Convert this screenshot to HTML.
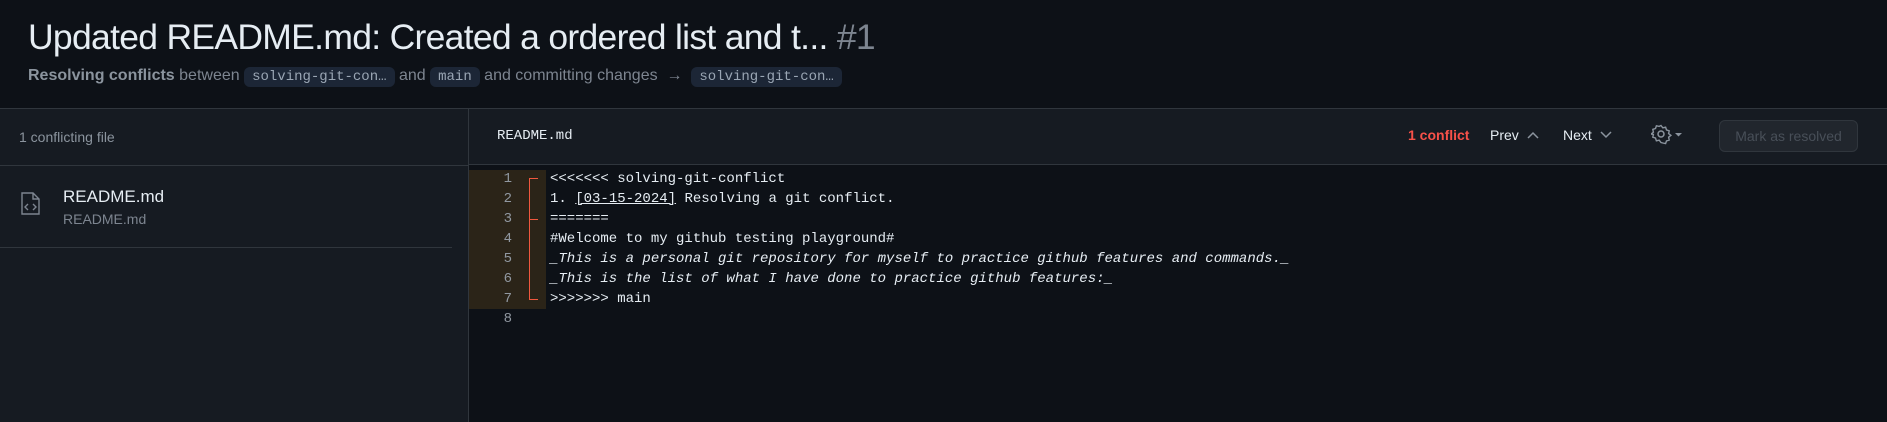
<!DOCTYPE html>
<html><head><style>
*{margin:0;padding:0;box-sizing:border-box}
body{width:1887px;height:422px;background:#0d1117;font-family:"Liberation Sans",sans-serif;color:#e6edf3;position:relative;overflow:hidden}
.a{position:absolute;white-space:nowrap}
.mono{font-family:"Liberation Mono",monospace}
.pill{background:#1c2636;border-radius:6px;padding:2px 8px;font-family:"Liberation Mono",monospace;font-size:14px;color:#9aa6b4}
.code{position:absolute;left:550px;font-family:"Liberation Mono",monospace;font-size:14px;color:#e6edf3}
.ln{position:absolute;left:480px;width:32px;text-align:right;font-family:"Liberation Mono",monospace;font-size:14px;color:#9198a1}
</style></head><body>
<div class="a" style="left:28px;top:17px;font-size:35.5px;letter-spacing:-0.7px">Updated README.md: Created a ordered list and t... <span style="color:#7d8590">#1</span></div>
<div class="a" style="left:28px;top:67px;font-size:16px;color:#7d8590"><b style="color:#8b949e">Resolving conflicts</b> between <span class="pill">solving-git-con…</span> and <span class="pill">main</span> and committing changes &nbsp;→&nbsp; <span class="pill">solving-git-con…</span></div>
<div class="a" style="left:0;top:108px;width:1887px;height:1px;background:#30363d"></div>
<div class="a" style="left:0;top:109px;width:468px;height:313px;background:#161b22"></div>
<div class="a" style="left:468px;top:109px;width:1px;height:313px;background:#30363d"></div>
<div class="a" style="left:19px;top:129px;font-size:14px;color:#8b949e">1 conflicting file</div>
<div class="a" style="left:0;top:165px;width:468px;height:1px;background:#30363d"></div>
<svg class="a" style="left:20px;top:191px" width="22" height="26" viewBox="0 0 22 26" fill="none" stroke="#7d8590" stroke-width="1.4"><path d="M2 2h11l6 6v15H2z M13 2v6h6"/><path d="M8 13l-3 3 3 3 M13 13l3 3-3 3"/></svg>
<div class="a" style="left:63px;top:187px;font-size:17px;color:#e6edf3">README.md</div>
<div class="a" style="left:63px;top:211px;font-size:14px;color:#7d8590">README.md</div>
<div class="a" style="left:0;top:247px;width:452px;height:1px;background:#30363d"></div>
<div class="a" style="left:469px;top:109px;width:1418px;height:55px;background:#161b22"></div>
<div class="a" style="left:469px;top:164px;width:1418px;height:1px;background:#30363d"></div>
<div class="a mono" style="left:497px;top:128px;font-size:14px">README.md</div>
<div class="a" style="left:1408px;top:127px;font-size:14px;color:#f85149;font-weight:bold">1 conflict</div>
<div class="a" style="left:1490px;top:127px;font-size:14px">Prev <svg width="14" height="10" style="margin-left:3px"><path d="M2 8l5-5 5 5" stroke="#8b949e" stroke-width="1.5" fill="none"/></svg></div>
<div class="a" style="left:1563px;top:127px;font-size:14px">Next <svg width="14" height="10" style="margin-left:3px"><path d="M2 2l5 5 5-5" stroke="#8b949e" stroke-width="1.5" fill="none"/></svg></div>
<svg class="a" style="left:1651px;top:124px" width="36" height="22" viewBox="0 0 36 22"><circle cx="10" cy="10" r="3" stroke="#8b949e" stroke-width="1.5" fill="none"/><path d="M10 1.5l1.8 2.3 2.8-.6.9 2.7 2.7.9-.6 2.8 2.3 1.8-2.3 1.8.6 2.8-2.7.9-.9 2.7-2.8-.6L10 18.5l-1.8-2.3-2.8.6-.9-2.7-2.7-.9.6-2.8L.1 10l2.3-1.8-.6-2.8 2.7-.9.9-2.7 2.8.6z" stroke="#8b949e" stroke-width="1.4" fill="none"/><path d="M24 9h7l-3.5 3.5z" fill="#8b949e"/></svg>
<div class="a" style="left:1719px;top:120px;width:139px;height:32px;border:1px solid #30363d;border-radius:6px;background:#21262d;color:#484f58;font-size:14px;line-height:30px;text-align:center">Mark as resolved</div>
<div class="a" style="left:469px;top:170px;width:77px;height:139px;background:#2b2418"></div>
<div class="a" style="left:529px;top:178px;width:1px;height:122px;background:#f0583e"></div>
<div class="a" style="left:529px;top:178px;width:9px;height:1px;background:#f0583e"></div>
<div class="a" style="left:529px;top:219px;width:9px;height:1px;background:#f0583e"></div>
<div class="a" style="left:529px;top:299px;width:9px;height:1px;background:#f0583e"></div>
<div class="ln" style="top:171px">1</div><div class="ln" style="top:191px">2</div><div class="ln" style="top:211px">3</div><div class="ln" style="top:231px">4</div><div class="ln" style="top:251px">5</div><div class="ln" style="top:271px">6</div><div class="ln" style="top:291px">7</div><div class="ln" style="top:311px">8</div>
<div class="code" style="top:171px">&lt;&lt;&lt;&lt;&lt;&lt;&lt; solving-git-conflict</div>
<div class="code" style="top:191px">1. <u>[03-15-2024]</u> Resolving a git conflict.</div>
<div class="code" style="top:211px">=======</div>
<div class="code" style="top:231px">#Welcome to my github testing playground#</div>
<div class="code" style="top:251px;font-style:italic">_This is a personal git repository for myself to practice github features and commands._</div>
<div class="code" style="top:271px;font-style:italic">_This is the list of what I have done to practice github features:_</div>
<div class="code" style="top:291px">&gt;&gt;&gt;&gt;&gt;&gt;&gt; main</div>
</body></html>
